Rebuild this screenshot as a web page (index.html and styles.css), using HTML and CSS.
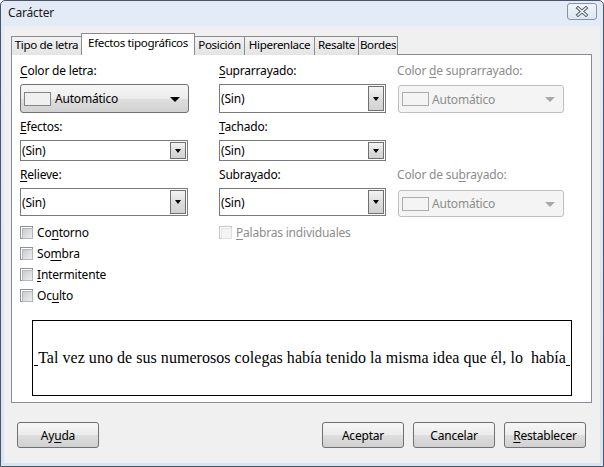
FILE: index.html
```html
<!DOCTYPE html>
<html lang="es">
<head>
<meta charset="utf-8">
<title>Carácter</title>
<link rel="stylesheet" href="styles.css">
</head>
<body>
<div class="window">
  <div class="titlebar">
    <span class="title">Carácter</span>
    <span class="close">
      <svg width="14" height="11" viewBox="0 0 14 11">
        <path d="M3 2 L11 9 M11 2 L3 9" stroke="#56657a" stroke-width="3.4" stroke-linecap="square" fill="none"/>
        <path d="M3 2 L11 9 M11 2 L3 9" stroke="#f5f7fa" stroke-width="1.4" stroke-linecap="square" fill="none"/>
      </svg>
    </span>
  </div>
  <div class="client">
    <div class="tabs">
      <div class="tab t1">Tipo de letra</div>
      <div class="tab t2 active">Efectos tipográficos</div>
      <div class="tab t3">Posición</div>
      <div class="tab t4">Hiperenlace</div>
      <div class="tab t5">Resalte</div>
      <div class="tab t6">Bordes</div>
    </div>
    <div class="panel">
      <div class="grid">
        <div class="lbl"><u>C</u>olor de letra:</div>
        <div class="lbl"><u>S</u>uprarrayado:</div>
        <div class="lbl dis">Color <u>d</u>e suprarrayado:</div>

        <div class="colorbtn c1">
          <span class="swatch"></span><span class="ctext">Automático</span>
          <span class="bigarrow"></span>
        </div>
        <div class="combo w2 tall"><span class="val">(Sin)</span><span class="drop"><span class="arr"></span></span></div>
        <div class="colorbtn disabled c3">
          <span class="swatch"></span><span class="ctext">Automático</span>
          <span class="bigarrow"></span>
        </div>

        <div class="lbl"><u>E</u>fectos:</div>
        <div class="lbl"><u>T</u>achado:</div>
        <div class="lbl"></div>

        <div class="combo w1 short"><span class="val">(Sin)</span><span class="drop"><span class="arr"></span></span></div>
        <div class="combo w2 short"><span class="val">(Sin)</span><span class="drop"><span class="arr"></span></span></div>
        <div></div>

        <div class="lbl"><u>R</u>elieve:</div>
        <div class="lbl">Subra<u>y</u>ado:</div>
        <div class="lbl dis">Color de su<u>b</u>rayado:</div>

        <div class="combo w1 tall3"><span class="val">(Sin)</span><span class="drop"><span class="arr"></span></span></div>
        <div class="combo w2 tall3"><span class="val">(Sin)</span><span class="drop"><span class="arr"></span></span></div>
        <div class="colorbtn disabled c3b">
          <span class="swatch"></span><span class="ctext">Automático</span>
          <span class="bigarrow"></span>
        </div>
      </div>

      <div class="checks">
        <div class="checkcol first">
          <div class="check"><span class="box"></span><span>Co<u>n</u>torno</span></div>
          <div class="check"><span class="box"></span><span>So<u>m</u>bra</span></div>
          <div class="check"><span class="box"></span><span><u>I</u>ntermitente</span></div>
          <div class="check"><span class="box"></span><span>Oc<u>u</u>lto</span></div>
        </div>
        <div class="checkcol">
          <div class="check dis"><span class="box"></span><span><u>P</u>alabras individuales</span></div>
        </div>
      </div>

      <div class="preview">
        <span class="mark"></span><span class="ptext">Tal vez uno de sus numerosos colegas había tenido la misma idea que él, lo&nbsp; había</span><span class="mark"></span>
      </div>
    </div>

    <div class="buttons">
      <div class="btn">Ay<u>u</u>da</div>
      <div class="spacer"></div>
      <div class="btn">Aceptar</div>
      <div class="btn">Cancelar</div>
      <div class="btn"><u>R</u>establecer</div>
    </div>
  </div>
</div>
</body>
</html>
```

FILE: styles.css
```css
* { box-sizing: border-box; }
html, body { margin: 0; padding: 0; }
body {
  width: 604px;
  height: 467px;
  overflow: hidden;
  background: #ffffff;
  font-family: "Noto Sans", "Open Sans", sans-serif;
  font-size: 12px;
  color: #000;
}
u { text-decoration: underline; text-underline-offset: 2px; text-decoration-thickness: 1px; }

.window {
  width: 604px;
  height: 467px;
  border: 1px solid #4a5568;
  border-radius: 5px 5px 0 0;
  background: linear-gradient(to bottom, #e3ebf6, #d9e4f1);
  padding: 0 3px 3px 3px;
  display: flex;
  flex-direction: column;
}

.titlebar {
  height: 25px;
  display: flex;
  align-items: center;
  padding-left: 4px;
}
.title {
  flex: 1;
  font-size: 12px;
  color: #1a1a1a;
  line-height: 16px;
  margin-top: -1px;
  letter-spacing: -0.2px;
}
.close {
  width: 30px;
  height: 17px;
  margin-right: 3px;
  margin-top: -4px;
  border: 1px solid #8393a9;
  border-radius: 3px;
  background: linear-gradient(to bottom, #f1f5fa, #dde6f1);
  display: flex;
  align-items: center;
  justify-content: center;
}
.close svg { display: block; }

.client {
  flex: 1;
  background: #f0f0f0;
  padding: 7px 0 0 0;
  display: flex;
  flex-direction: column;
}

/* Tabs */
.tabs {
  height: 22px;
  display: flex;
  align-items: flex-start;
  padding-left: 7px;
  position: relative;
  z-index: 1;
}
.tab {
  height: 19px;
  margin-top: 3px;
  margin-left: -1px;
  border: 1px solid #898c95;
  border-bottom: none;
  background: linear-gradient(to bottom, #f2f2f2, #e4e4e4);
  line-height: 16px;
  font-size: 11.6px;
  text-align: center;
  white-space: nowrap;
  overflow: hidden;
  letter-spacing: -0.35px;
}
.tab:first-child { margin-left: 0; }
.tab.active {
  height: 22px;
  margin-top: 0;
  background: #ffffff;
  line-height: 18px;
  position: relative;
  z-index: 2;
}
.t1 { width: 71px; }
.t2 { width: 114px; }
.t3 { width: 51px; }
.t4 { width: 71px; }
.t5 { width: 45px; }
.t6 { width: 40px; }

/* Panel */
.panel {
  margin: -1px 0 0 7px;
  width: 581px;
  height: 349px;
  border: 1px solid #898c95;
  background: #ffffff;
  padding-top: 2px;
}

.grid {
  display: grid;
  grid-template-columns: 199px 178px 1fr;
  padding-left: 8px;
  align-items: start;
}
.lbl {
  height: 16px;
  line-height: 16px;
  margin: 6px 0 5px 0;
  white-space: nowrap;
  letter-spacing: -0.2px;
}
.lbl.dis { color: #8c8c8c; }

/* Combo boxes */
.combo {
  display: flex;
  align-items: stretch;
  background: #fff;
  border: 1px solid #7a7a7a;
}
.combo.w1 { width: 168px; }
.combo.w2 { width: 167px; }
.combo.tall { height: 29px; }
.combo.short { height: 21px; }
.combo.tall3 { height: 28px; }
.combo .val {
  flex: 1;
  display: flex;
  align-items: center;
  padding-left: 1px;
  letter-spacing: -0.2px;
}
.drop {
  width: 16px;
  margin: 1px;
  border: 1px solid #6f6f6f;
  background: linear-gradient(to bottom, #f3f3f3, #dcdcdc 55%, #d2d2d2);
  display: flex;
  align-items: center;
  justify-content: center;
}
.arr {
  width: 0;
  height: 0;
  border-left: 3.5px solid transparent;
  border-right: 3.5px solid transparent;
  border-top: 4px solid #000;
}

/* Color buttons */
.colorbtn {
  display: flex;
  align-items: center;
  border: 1px solid #707070;
  border-radius: 3px;
  background: linear-gradient(to bottom, #f7f7f7, #ececec 50%, #dedede 52%, #d2d2d2);
  padding-left: 3px;
  padding-right: 8px;
}
.colorbtn.c1 { width: 169px; height: 29px; }
.colorbtn.c3 { width: 166px; height: 28px; margin-top: 1px; margin-left: 1px; }
.colorbtn.c3b { width: 166px; height: 27px; margin-top: 2px; margin-left: 1px; }
.swatch {
  width: 27px;
  height: 14px;
  border: 1px solid #858585;
  background: #f0f0f0;
}
.ctext {
  flex: 1;
  margin-left: 4px;
  letter-spacing: -0.2px;
}
.bigarrow {
  width: 0;
  height: 0;
  border-left: 5px solid transparent;
  border-right: 5px solid transparent;
  border-top: 5px solid #000;
  margin-top: 1px;
}
.colorbtn.disabled {
  border-color: #bfbfbf;
  background: #f4f4f4;
  color: #8d8d8d;
}
.colorbtn.disabled .swatch { border-color: #adadad; background: #f4f4f4; }
.colorbtn.disabled .bigarrow { border-top-color: #a8a8a8; }
.colorbtn.disabled .ctext { margin-left: 3px; }

/* Checkboxes */
.checks {
  display: flex;
  padding-left: 8px;
  margin-top: 5px;
}
.checkcol.first { width: 199px; }
.check {
  height: 21px;
  display: flex;
  align-items: center;
  gap: 4px;
  letter-spacing: -0.2px;
}
.box {
  width: 13px;
  height: 13px;
  border: 1px solid #8e8f8f;
  background: #fff;
  padding: 1px;
  display: block;
}
.box::after {
  content: "";
  display: block;
  width: 9px;
  height: 9px;
  background: linear-gradient(135deg, #c9ccd1, #eeeeee);
  border: 1px solid #b4b6ba;
}
.check.dis { color: #8d8d8d; }
.check.dis .box { border-color: #c6c6c6; }
.check.dis .box::after { background: #f4f4f4; border-color: #e2e2e2; }

/* Preview */
.preview {
  margin: 14px 0 0 20px;
  width: 540px;
  height: 76px;
  border: 1px solid #000;
  display: flex;
  align-items: center;
  justify-content: space-between;
  padding: 0 1px;
  font-family: "Liberation Serif", "Times New Roman", serif;
  font-size: 16px;
  color: #000;
}
.ptext {
  white-space: nowrap;
  line-height: 20px;
  letter-spacing: 0.04px;
}
.mark {
  width: 5px;
  height: 1px;
  background: #000;
  margin-top: 14px;
}

/* Bottom buttons */
.buttons {
  display: flex;
  gap: 9px;
  padding: 0 14px 0 13px;
  margin-top: 19px;
}
.spacer { flex: 1; }
.btn {
  width: 82px;
  height: 26px;
  border: 1px solid #707070;
  border-radius: 3px;
  background: linear-gradient(to bottom, #f6f6f6, #ececec 48%, #dedede 52%, #d0d0d0);
  display: flex;
  align-items: center;
  justify-content: center;
  letter-spacing: -0.2px;
}
```
